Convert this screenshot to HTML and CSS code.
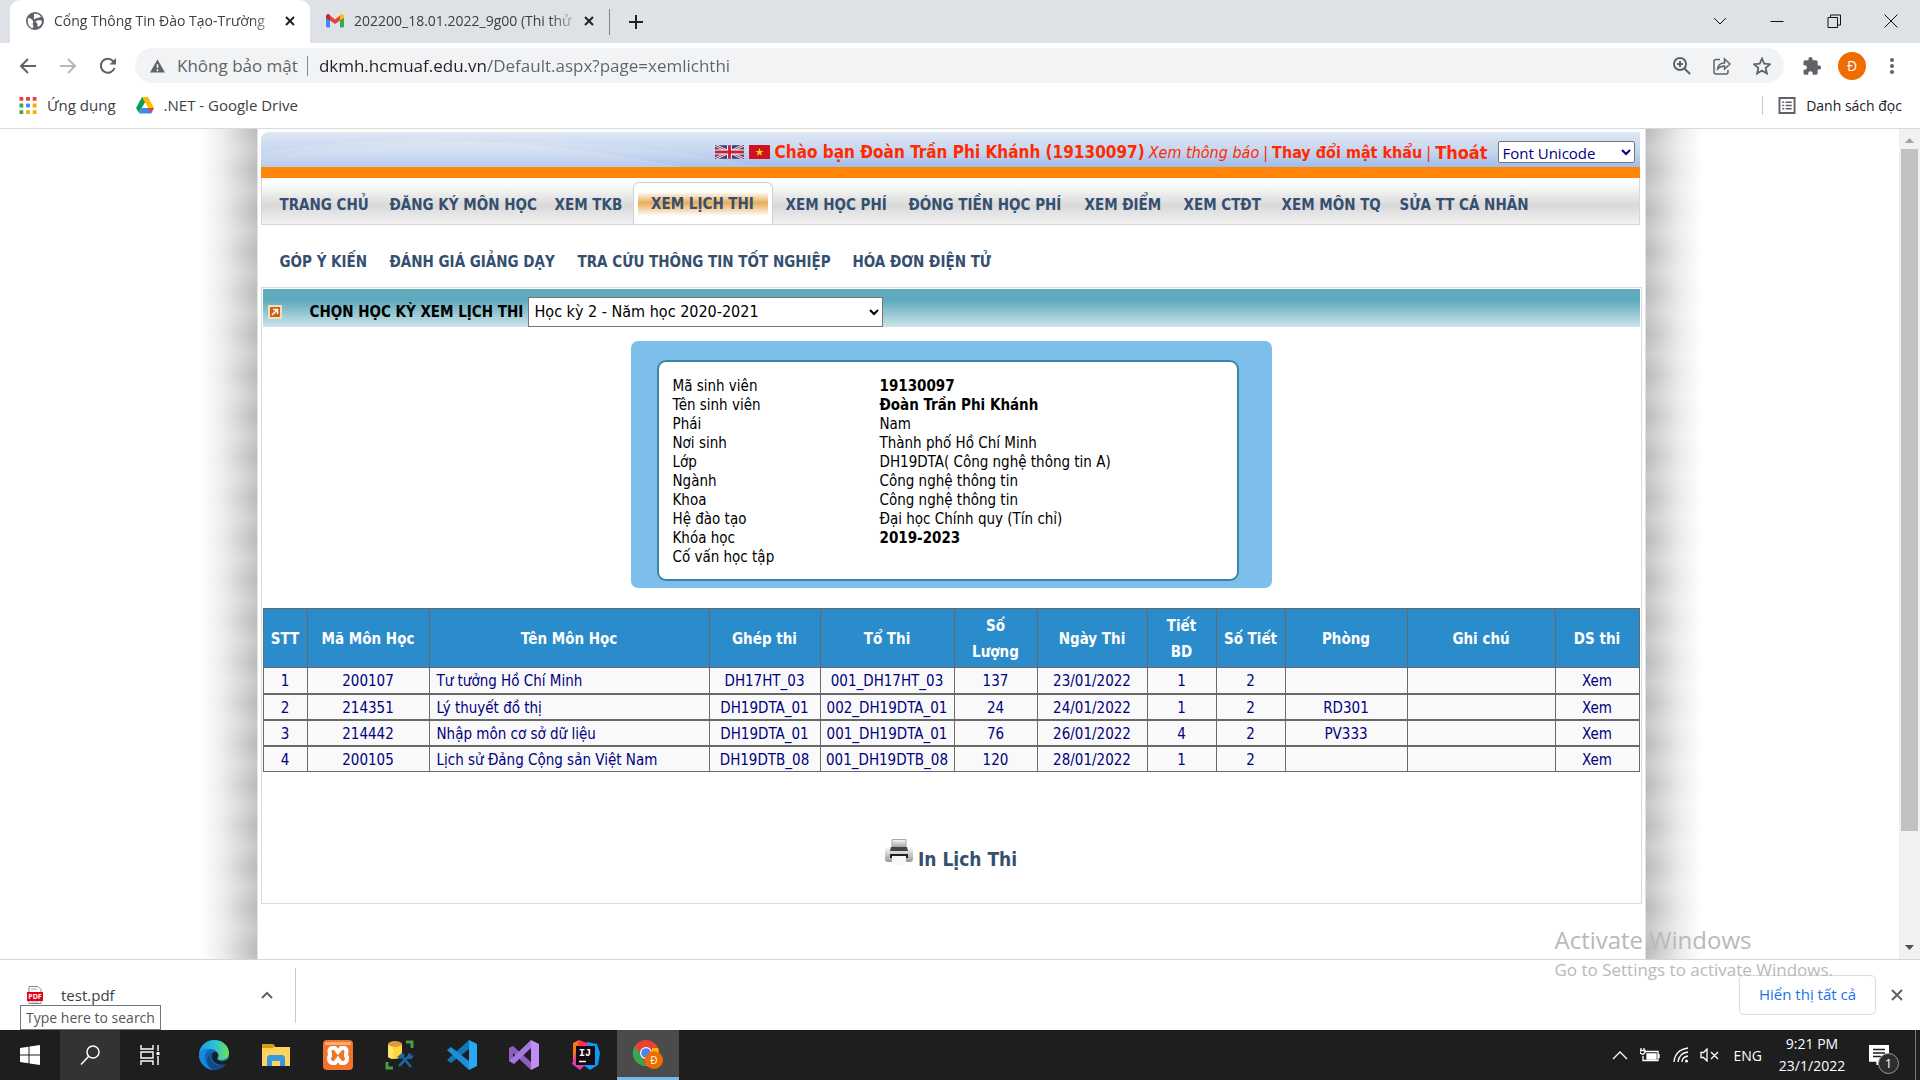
FILE: index.html
```html
<!DOCTYPE html>
<html lang="vi">
<head>
<meta charset="utf-8">
<title>Cổng Thông Tin Đào Tạo</title>
<link rel="stylesheet" href="styles.css">
</head>
<body>
<header class="browser">
  <div class="tabstrip">
    <div class="tab tab-active">
      <svg class="favicon" viewBox="0 0 18 18"><circle cx="9" cy="9" r="9" fill="#5f6368"/><path d="M2 6c2 0 4 1 5 3s-1 2 0 4 0 3-1 3C3 15 1 11 2 6zM8 2c3-1 6 1 7 3-2 0-2 1-4 1S9 8 8 7s1-2 0-3zM10 9c2-1 5-1 6 0 0 3-2 5-4 6-1-1 0-3-1-4s-2-1-1-2z" fill="#fff"/></svg>
      <span class="tab-title">Cổng Thông Tin Đào Tạo-Trường</span>
      <button class="tab-close" aria-label="Đóng"><svg viewBox="0 0 10 10"><path d="M1 1l8 8M9 1L1 9"/></svg></button>
    </div>
    <div class="tab tab-second">
      <svg class="favicon" viewBox="0 0 18 18"><path d="M0 4v10q0 1.500 1.500 1.500H4V8z" fill="#4285f4"/><path d="M14 8v7.500h2.500Q18 15.500 18 14V4z" fill="#34a853"/><path d="M4 3.500v5L9 12l5-3.500v-5L9 7.500z" fill="#ea4335"/><path d="M0 4.500Q0 2 2 2q1 0 2 1v5.500L0 6z" fill="#c5221f"/><path d="M18 4.500Q18 2 16 2q-1 0-2 1v5.500L18 6z" fill="#fbbc04"/></svg>
      <span class="tab-title">202200_18.01.2022_9g00 (Thi thử</span>
      <button class="tab-close" aria-label="Đóng"><svg viewBox="0 0 10 10"><path d="M1 1l8 8M9 1L1 9"/></svg></button>
    </div>
    <button class="newtab" aria-label="Thẻ mới"><svg viewBox="0 0 16 16"><path d="M8 1v14M1 8h14"/></svg></button>
    <div class="winctl">
      <button aria-label="Tìm thẻ"><svg viewBox="0 0 14 14"><path d="M1 4l6 6 6-6"/></svg></button>
      <button aria-label="Thu nhỏ"><svg viewBox="0 0 14 14"><path d="M0.500 7.500h13"/></svg></button>
      <button aria-label="Khôi phục"><svg viewBox="0 0 14 14"><path d="M1 3.500h9.500v10H1zM3.500 3.500v-2.500h10v10h-3"/></svg></button>
      <button aria-label="Đóng"><svg viewBox="0 0 14 14"><path d="M0.500 0.500l13 13M13.500 0.500l-13 13"/></svg></button>
    </div>
  </div>
  <div class="toolbar">
    <button class="nav" aria-label="Quay lại"><svg viewBox="0 0 18 18"><path d="M17 9H2M9 2L2 9l7 7"/></svg></button>
    <button class="nav nav-off" aria-label="Tiến"><svg viewBox="0 0 18 18"><path d="M1 9h15M9 2l7 7-7 7"/></svg></button>
    <button class="nav" aria-label="Tải lại"><svg viewBox="0 0 18 18"><path d="M15.500 11A7 7 0 1 1 14 4l2 2"/><path d="M17 1v6.500h-6.500z" fill="#5f6368" stroke="none"/></svg></button>
    <div class="omnibox">
      <svg class="warn" viewBox="0 0 16 14"><path d="M8 0l8 14H0z" fill="#5f6368"/><path d="M8 5v4M8 10.500v2" stroke="#fff" stroke-width="1.600"/></svg>
      <span class="insecure">Không bảo mật</span>
      <input class="url" aria-label="Địa chỉ" value="dkmh.hcmuaf.edu.vn/Default.aspx?page=xemlichthi">
      <button class="nav" aria-label="Thu phóng"><svg viewBox="0 0 18 18"><circle cx="7" cy="7" r="6"/><path d="M11.500 11.500l5.500 5.500M4 7h6M7 4v6"/></svg></button>
      <button class="nav" aria-label="Chia sẻ"><svg viewBox="0 0 18 18"><path d="M7 2.500H3q-2 0-2 2V15q0 2 2 2h10q2 0 2-2v-2M4.500 12c.5-4 3-6 7-6V2L17 7l-5.500 5V9c-3 0-5 1-7 3z" stroke-width="1.500"/></svg></button>
      <button class="nav" aria-label="Đánh dấu"><svg viewBox="0 0 18 18"><path d="M9 1.500l2.200 5.200 5.800.5-4.400 3.800 1.300 5.500L9 13.500l-4.900 3 1.300-5.500L1 7.200l5.800-.5z" stroke-width="1.800"/></svg></button>
    </div>
    <button class="nav" aria-label="Tiện ích"><svg viewBox="0 0 18 18"><path d="M16 8.500h-1.300V5q0-1.700-1.700-1.700H9.600V2.200a2.100 2.100 0 0 0-4.200 0v1.100H2Q.5 3.300.5 5v3.200h1.200a2.200 2.200 0 0 1 0 4.500H.5V16q0 1.700 1.500 1.700h3.200v-1.200a2.200 2.200 0 0 1 4.500 0v1.200H13q1.700 0 1.700-1.700v-3.400H16a2 2 0 0 0 0-4.100z" fill="#5f6368" stroke="none"/></svg></button>
    <button class="avatar">Đ</button>
    <button class="nav" aria-label="Menu"><svg viewBox="0 0 18 18"><g fill="#5f6368" stroke="none"><circle cx="9" cy="3" r="2"/><circle cx="9" cy="9" r="2"/><circle cx="9" cy="15" r="2"/></g></svg></button>
  </div>
  <div class="bookmarks">
    <a href="#" class="bookmark"><svg viewBox="0 0 18 18"><path d="M0 0h4v4H0zM7 0h4v4H7zM14 0h4v4h-4z" fill="#ea4335"/><path d="M0 7h4v4H0zM0 14h4v4H0z" fill="#34a853"/><path d="M7 7h4v4H7z" fill="#4285f4"/><path d="M14 7h4v4h-4zM7 14h4v4H7zM14 14h4v4h-4z" fill="#f9ab00"/></svg><span>Ứng dụng</span></a>
    <a href="#" class="bookmark"><svg viewBox="0 0 18 17"><path d="M6 0h6L9 5.500 3 16 0 11z" fill="#0f9d58"/><path d="M6 0h6l6 11h-6z" fill="#fbbc04"/><path d="M6 11h12l-3 5.500H3z" fill="#4285f4"/><path d="M12 11h6l-3 5.500z" fill="#ea4335"/><path d="M9 5.500L12 11H6z" fill="#fff"/></svg><span>.NET - Google Drive</span></a>
    <a href="#" class="bookmark readlist"><svg viewBox="0 0 18 18"><path d="M1 1h16v16H1z" fill="none" stroke="#5f6368" stroke-width="2"/><path d="M4 5.500h2M7.500 5.500H14M4 9h2M7.500 9H14M4 12.500h2M7.500 12.500H14" stroke="#5f6368" stroke-width="1.500"/></svg><span>Danh sách đọc</span></a>
  </div>
</header>

<div class="viewport">
  <main class="page">
    <div class="sheet">
      <div class="banner">
        <svg class="wave" viewBox="0 0 500 35" preserveAspectRatio="none"><path d="M0 20Q200-10 420 35H0z" fill="#fff" opacity=".15"/><path d="M0 25Q300-10 500 35H0z" fill="#fff" opacity=".12"/></svg>
        <div class="greet">
          <svg class="flag-uk" viewBox="0 0 30 14"><path fill="#3c3f77" d="M0 0h30v14H0z"/><path d="M0 0l30 14M30 0L0 14" stroke="#e8dfe4" stroke-width="3"/><path d="M0 0l30 14M30 0L0 14" stroke="#b8304a" stroke-width="1"/><path d="M15 0v14M0 7h30" stroke="#fff" stroke-width="5"/><path d="M15 0v14M0 7h30" stroke="#c8203a" stroke-width="3"/></svg>
          <svg class="flag-vn" viewBox="0 0 21 14"><path fill="#cf1126" d="M0 0h21v14H0z"/><path d="M10.500 3l1 3h3l-2.400 1.800.9 3-2.500-1.800L8 10.800l.9-3L6.500 6h3z" fill="#ffd800"/></svg>
          <b class="hello">Chào bạn Đoàn Trần Phi Khánh (19130097)</b>
          <a href="#" class="notice">Xem thông báo</a><i class="bar">|</i>
          <a href="#" class="pass">Thay đổi mật khẩu</a><i class="bar">|</i>
          <a href="#" class="logout">Thoát</a>
          <select class="fontsel" aria-label="Font"><option>Font Unicode</option></select>
        </div>
      </div>
      <nav class="menu">
        <div class="menu-row menu-main">
          <a href="#">TRANG CHỦ</a><a href="#">ĐĂNG KÝ MÔN HỌC</a><a href="#">XEM TKB</a><a href="#" class="current"><span>XEM LỊCH THI</span></a><a href="#">XEM HỌC PHÍ</a><a href="#">ĐÓNG TIỀN HỌC PHÍ</a><a href="#">XEM ĐIỂM</a><a href="#">XEM CTĐT</a><a href="#">XEM MÔN TQ</a><a href="#">SỬA TT CÁ NHÂN</a>
        </div>
        <div class="menu-row menu-sub">
          <a href="#">GÓP Ý KIẾN</a><a href="#">ĐÁNH GIÁ GIẢNG DẠY</a><a href="#">TRA CỨU THÔNG TIN TỐT NGHIỆP</a><a href="#">HÓA ĐƠN ĐIỆN TỬ</a>
        </div>
      </nav>
      <section class="box">
        <div class="term">
          <svg class="term-icon" viewBox="0 0 14 14"><path fill="#f3dcc4" d="M0 0h14v14H0z"/><path fill="#c8640c" d="M2 2h10v10H2z"/><path d="M4 10l5-5M5 4.500h4.500V9" stroke="#fff" stroke-width="1.500" fill="none"/></svg>
          <label for="term">CHỌN HỌC KỲ XEM LỊCH THI</label>
          <select id="term"><option>Học kỳ 2 - Năm học 2020-2021</option></select>
        </div>
        <div class="card">
          <dl class="info">
            <dt>Mã sinh viên</dt><dd><b>19130097</b></dd>
            <dt>Tên sinh viên</dt><dd><b>Đoàn Trần Phi Khánh</b></dd>
            <dt>Phái</dt><dd>Nam</dd>
            <dt>Nơi sinh</dt><dd>Thành phố Hồ Chí Minh</dd>
            <dt>Lớp</dt><dd>DH19DTA( Công nghệ thông tin A)</dd>
            <dt>Ngành</dt><dd>Công nghệ thông tin</dd>
            <dt>Khoa</dt><dd>Công nghệ thông tin</dd>
            <dt>Hệ đào tạo</dt><dd>Đại học Chính quy (Tín chỉ)</dd>
            <dt>Khóa học</dt><dd><b>2019-2023</b></dd>
            <dt>Cố vấn học tập</dt><dd></dd>
          </dl>
        </div>
        <table class="exams">
          <colgroup><col class="c-stt"><col class="c-code"><col class="c-name"><col class="c-merge"><col class="c-group"><col class="c-qty"><col class="c-date"><col class="c-num"><col class="c-num"><col class="c-room"><col class="c-note"><col class="c-list"></colgroup>
          <thead><tr><th>STT</th><th>Mã Môn Học</th><th>Tên Môn Học</th><th>Ghép thi</th><th>Tổ Thi</th><th>Số<br>Lượng</th><th>Ngày Thi</th><th>Tiết<br>BD</th><th>Số Tiết</th><th>Phòng</th><th>Ghi chú</th><th>DS thi</th></tr></thead>
          <tbody>
            <tr><td>1</td><td>200107</td><td class="name">Tư tưởng Hồ Chí Minh</td><td>DH17HT_03</td><td>001_DH17HT_03</td><td>137</td><td>23/01/2022</td><td>1</td><td>2</td><td></td><td></td><td><a href="#">Xem</a></td></tr>
            <tr><td>2</td><td>214351</td><td class="name">Lý thuyết đồ thị</td><td>DH19DTA_01</td><td>002_DH19DTA_01</td><td>24</td><td>24/01/2022</td><td>1</td><td>2</td><td>RD301</td><td></td><td><a href="#">Xem</a></td></tr>
            <tr><td>3</td><td>214442</td><td class="name">Nhập môn cơ sở dữ liệu</td><td>DH19DTA_01</td><td>001_DH19DTA_01</td><td>76</td><td>26/01/2022</td><td>4</td><td>2</td><td>PV333</td><td></td><td><a href="#">Xem</a></td></tr>
            <tr><td>4</td><td>200105</td><td class="name">Lịch sử Đảng Cộng sản Việt Nam</td><td>DH19DTB_08</td><td>001_DH19DTB_08</td><td>120</td><td>28/01/2022</td><td>1</td><td>2</td><td></td><td></td><td><a href="#">Xem</a></td></tr>
          </tbody>
        </table>
        <a href="#" class="print">
          <svg viewBox="0 0 28 27"><defs><linearGradient id="pg" x1="0" y1="0" x2="0" y2="1"><stop offset="0" stop-color="#fafafa"/><stop offset="1" stop-color="#999"/></linearGradient></defs><path d="M7 .5h14V9H7z" fill="url(#pg)" stroke="#aaa"/><rect x="0" y="8" width="28" height="15" rx="3" fill="url(#pg)"/><path d="M6 8h16l1 4H5z" fill="#444"/><path d="M5 15h18v4H5z" fill="#222"/><path d="M7 17h14v9H7z" fill="#f7f7f7"/></svg>
          <span>In Lịch Thi</span>
        </a>
      </section>
    </div>
  </main>
  <div class="scrollbar">
    <svg viewBox="0 0 9 5"><path d="M0 5l4.500-5L9 5z" fill="#a3a3a3"/></svg>
    <div class="thumb"></div>
    <svg viewBox="0 0 9 5"><path d="M0 0l4.500 5L9 0z" fill="#505050"/></svg>
  </div>
</div>

<footer class="shelf">
  <div class="download">
    <svg class="pdf" viewBox="0 0 16 18"><path d="M2 .5h9l3 3v14H2z" fill="#fff" stroke="#8a8a8a"/><path d="M4 3h6M4 16h8" stroke="#aaa"/><path d="M0 6h16v9H0z" fill="#e2001a"/><text x="8" y="13" class="pdf-text">PDF</text></svg>
    <span>test.pdf</span>
    <button aria-label="Tùy chọn"><svg viewBox="0 0 12 8"><path d="M1 7l5-5 5 5"/></svg></button>
  </div>
  <button class="showall">Hiển thị tất cả</button>
  <button class="shelf-close" aria-label="Đóng"><svg viewBox="0 0 12 12"><path d="M1 1l10 10M11 1L1 11"/></svg></button>
  <div class="tooltip">Type here to search</div>
  <div class="activate"><div class="activate-title">Activate Windows</div><div>Go to Settings to activate Windows.</div></div>
</footer>

<nav class="taskbar">
  <button class="task" aria-label="Start"><svg viewBox="0 0 20 20"><path d="M0 3l8.500-1.200v7.700H0zM9.500 1.600L20 0v9.500H9.500zM0 10.500h8.500v7.700L0 17zM9.500 10.500H20V20L9.500 18.400z" fill="#fff"/></svg></button>
  <button class="task task-search" aria-label="Search"><svg viewBox="0 0 20 20"><g fill="none" stroke="#fff" stroke-width="1.500"><circle cx="13" cy="7" r="6"/><path d="M8.500 11.500L1 19.500"/></g></svg></button>
  <button class="task" aria-label="Task view"><svg viewBox="0 0 20 20"><path d="M1 0v4h12V0M1 20v-4h12v4M1 7h12v6H1zM18 0v6M18 11v9" fill="none" stroke="#fff" stroke-width="1.400"/><path d="M16.500 7h3v3h-3z" fill="#fff"/></svg></button>
  <button class="task app" aria-label="Edge"><svg viewBox="0 0 30 30"><defs><linearGradient id="eg"><stop offset="0" stop-color="#1f9de4"/><stop offset=".55" stop-color="#2cc3d5"/><stop offset="1" stop-color="#6fe04e"/></linearGradient></defs><circle cx="15" cy="15" r="15" fill="#0f66b8"/><path d="M0 14C1 5 8 0 15 0c9 0 15 6 15 13 0 5-4 7-7 7-4 0-5-1-4-3 1-5-3-8-8-8C6 9 1 11 0 14z" fill="url(#eg)"/><path d="M0 15c1-5 6-7 11-6-4 2-6 7-5 11 1 5 5 9 9 10C7 30 0 23 0 15z" fill="#168ad8"/><path d="M12 13c-3 9 5 15 15 11-3 4-8 6-12 6-8-2-9-13-3-17z" fill="#114a8b"/><path d="M19 17c-1 1-2 3 2 4 3 1 6 0 8-2l1 1-2 4c-6 2-14 0-15-6-1-4 1-6 3-6 3 0 4 3 3 5z" fill="#1e1e1e"/></svg></button>
  <button class="task app" aria-label="Explorer"><svg viewBox="0 0 30 30"><path d="M1 4h11l2 3h15v19H1z" fill="#ffd45e"/><path d="M1 4h11l2 2-2 2H1z" fill="#d99a12"/><path d="M6 26V17l2-2h14l2 2v9h-5v-5h-8v5z" fill="#3a96dd"/></svg></button>
  <button class="task app" aria-label="XAMPP"><svg viewBox="0 0 30 30"><rect width="30" height="30" rx="4" fill="#f0742a"/><path d="M2 2h26v3H2z" fill="#f9ab7c"/><path d="M9.500 8h2.500l3 4 3-4h2.500q3 0 3 3.500T21 15q3 0 3 3.500t-3 4.500h-3l-3-4-3 4H9q-3-1-3-4.500T9 15q-2.500 0-2.500-3.500T9.500 8z" fill="none" stroke="#fff" stroke-width="4"/></svg></button>
  <button class="task app" aria-label="SSMS"><svg viewBox="0 0 30 30"><path d="M3 4v13q6 4 14 0V4z" fill="#fcd53f"/><path d="M3 4v13q2 2 5 2V4z" fill="#ffe66b"/><ellipse cx="10" cy="4" rx="7" ry="3" fill="#e39a3c"/><path d="M21 2h6v6M2 22v6h6" fill="none" stroke="#4a9a48" stroke-width="3"/><path d="M14 26l12-12M16 15l10 12" stroke="#1b64a8" stroke-width="2.500"/><path d="M12 17l5-4 3 2-4 4zM23 13l3 3 3-1-2 4h-4z" fill="#1b64a8"/></svg></button>
  <button class="task app" aria-label="VS Code"><svg viewBox="0 0 30 30"><path d="M22 0l8 4v22l-8 4z" fill="#29a9f2"/><path d="M22 0v9L4 23l-4-3z" fill="#1077bd"/><path d="M22 30v-9L4 7l-4 3z" fill="#1b8fd8"/></svg></button>
  <button class="task app" aria-label="Visual Studio"><svg viewBox="0 0 30 30"><path d="M0 8l4-2 18 16v8L4 13v9l-4-1z" fill="#8b5fc0"/><path d="M22 0l8 4v22l-8 4z" fill="#c08df5"/><path d="M22 0v8L5 24l-5-3z" fill="#a678de"/></svg></button>
  <button class="task app" aria-label="IntelliJ"><svg viewBox="0 0 30 30"><path d="M2 3l6-3 8 5-6 20-8-4z" fill="#f97a12"/><path d="M1 24l4-12 10 12-6 6z" fill="#e23aa6"/><path d="M16 2l10 2 3 9-2 12-8 5-7-5z" fill="#0a9cf0"/><path d="M8 0l8 3 2 5H6z" fill="#fe315d"/><path d="M5 6h19v19H5z" fill="#160a12"/><path d="M8 21.500h7" stroke="#fff" stroke-width="1.500"/><text x="8" y="16" class="ij-text">IJ</text></svg></button>
  <button class="task app task-on" aria-label="Chrome"><svg viewBox="0 0 30 30"><circle cx="13" cy="14" r="13" fill="#ea4335"/><path d="M2 7l7 11 4 9A13 13 0 0 1 2 7z" fill="#34a853"/><path d="M13 27l6-11V9h6a13 13 0 0 1-12 18z" fill="#fbbc04"/><circle cx="13" cy="14" r="6" fill="#fff"/><circle cx="13" cy="14" r="4.800" fill="#4285f4"/><circle cx="21" cy="21" r="9" fill="#ee6c00"/><text x="21" y="25" class="chrome-text">Đ</text></svg></button>
  <div class="tray">
    <svg class="t-up" viewBox="0 0 16 9"><path d="M1 8l7-7 7 7"/></svg>
    <svg class="t-bat" viewBox="0 0 20 14"><path d="M5 3.500h13v9H3V8M19 6v4"/><path d="M7 6h9v5H7z" fill="#fff"/><path d="M1 0v2M4 0v2M0 2.500h5v2L3 6.500 0 5z"/></svg>
    <svg class="t-wifi" viewBox="0 0 16 16"><path d="M1 15Q2 3 15 1M5 15Q6 6 15 5M9 15Q9 10 15 9"/><circle cx="13.500" cy="14" r="1.500" fill="#fff" stroke="none"/></svg>
    <svg class="t-vol" viewBox="0 0 19 14"><path d="M1 4.500h2.500L7 1v12L3.500 9.500H1zM11 4l7 7M18 4l-7 7"/></svg>
    <span class="lang">ENG</span>
    <div class="clock"><span>9:21 PM</span><span>23/1/2022</span></div>
    <div class="notify"><svg viewBox="0 0 20 20"><path d="M0 0h20v16h-8l-4 4v-4H0z" fill="#fff"/><path d="M4 4.500h12M4 8h12M4 11.500h8" stroke="#1e1e1e"/></svg><span class="count">1</span></div>
  </div>
</nav>
</body>
</html>
```
FILE: styles.css
```css
* { box-sizing: border-box; }
body { margin: 0; height: 100vh; display: flex; flex-direction: column; overflow: hidden; background: #fff; font-family: "Open Sans", "Noto Sans", sans-serif; font-size: 14px; color: #3c4043; }
button { border: 0; padding: 0; background: none; font: inherit; color: inherit; display: flex; align-items: center; justify-content: center; }
a { color: inherit; text-decoration: none; }
svg { display: block; flex: none; }

/* Browser frame */
.browser { flex: none; border-bottom: 1px solid #d9dadc; }
.tabstrip { display: flex; align-items: center; height: 43px; background: #dee1e6; padding-left: 10px; }
.tab { display: flex; align-items: center; height: 43px; width: 300px; padding: 0 13px 2px 16px; }
.tab-active { background: #fff; border-radius: 10px 10px 0 0; }
.tab-second { height: 26px; border-right: 1px solid #808387; }
.favicon { width: 18px; height: 18px; }
.tab-title { flex: 1; min-width: 0; margin-left: 10px; overflow: hidden; white-space: nowrap; line-height: 24px; -webkit-mask-image: linear-gradient(90deg, #000 88%, rgba(0,0,0,.1)); mask-image: linear-gradient(90deg, #000 88%, rgba(0,0,0,.1)); }
.tab-close { width: 14px; height: 20px; margin-left: 4px; }
.tab-close svg { width: 10px; height: 10px; fill: none; stroke: #202124; stroke-width: 2; }
.newtab { width: 52px; height: 41px; }
.newtab svg { width: 16px; height: 16px; fill: none; stroke: #202124; stroke-width: 2; }
.winctl { display: flex; margin: 0 1px 2px auto; height: 36px; }
.winctl button { width: 57px; }
.winctl svg { width: 14px; height: 14px; fill: none; stroke: #111; stroke-width: 1; }
.toolbar { display: flex; align-items: center; height: 45px; padding: 0 8px; }
.nav { width: 40px; height: 34px; }
.nav svg { width: 18px; height: 18px; fill: none; stroke: #5f6368; stroke-width: 2; }
.nav-off { opacity: .45; }
.omnibox { flex: 1; display: flex; align-items: center; height: 35px; margin: 0 8px 0 7px; padding: 0 2px 0 15px; border-radius: 18px; background: #f1f3f4; font-size: 17px; color: #5f6368; }
.warn { width: 15px; height: 14px; }
.insecure { margin-left: 12px; padding-right: 9px; border-right: 1px solid #80868b; line-height: 20px; white-space: nowrap; }
.url { flex: 1; min-width: 0; border: 0; padding: 0 0 0 11px; outline: 0; font: inherit; color: transparent; background: linear-gradient(90deg, #202124 179px, #5f6368 179px); -webkit-background-clip: text; background-clip: text; }
.avatar { width: 28px; height: 28px; margin: 0 6px; border-radius: 50%; background: #ee6c00; color: #fff; font-size: 14px; }
.bookmarks { display: flex; align-items: center; gap: 20px; height: 40px; padding: 0 18px 6px 19px; font-size: 15px; }
.bookmark { display: flex; align-items: center; gap: 10px; white-space: nowrap; }
.bookmark svg { width: 18px; height: 17px; }
.readlist { margin-left: auto; padding-left: 15px; border-left: 1px solid #c8cacd; color: #202124; font-size: 14px; }

/* Web page */
.viewport { flex: 1; min-height: 0; display: flex; overflow: hidden; font-family: "DejaVu Sans Condensed", "DejaVu Sans", sans-serif; font-stretch: condensed; font-size: 15px; }
.page { flex: 1; display: flex; justify-content: center; min-width: 0; padding-left: 3px; }
.page::before, .page::after { content: ""; width: 56px; flex: none; }
.page::before { background: linear-gradient(90deg, #fff, rgba(255,255,255,.7) 40%, rgba(255,255,255,0)), repeating-linear-gradient(#b9b9b9 0, #c8c8c8 20px, #b9b9b9 41px); }
.page::after { background: linear-gradient(270deg, #fff, rgba(255,255,255,.7) 40%, rgba(255,255,255,0)), repeating-linear-gradient(#b9b9b9 0, #c8c8c8 20px, #b9b9b9 41px); }
.sheet { flex: 0 1 1386px; padding: 3px 3px 0; border: solid #e4e4e4; border-width: 0 1px; }
.banner { display: grid; height: 46px; margin-right: 2px; border-radius: 8px 0 0; border-bottom: 11px solid #ff8408; background: linear-gradient(#dfe8f4, #c3d4ee 60%, #9fbce8); }
.wave { grid-area: 1 / 1; width: 500px; height: 35px; }
.greet { grid-area: 1 / 1; display: flex; align-items: center; justify-content: flex-end; height: 40px; padding-right: 5px; color: #ff2a00; font-size: 16px; white-space: nowrap; }
.flag-uk { width: 29px; height: 14px; margin-right: 5px; }
.flag-vn { width: 21px; height: 14px; margin-right: 5px; }
.hello { font-size: 17px; }
.notice { margin-left: 4px; font-style: italic; }
.bar { margin: 0 4px; font-style: normal; }
.pass { font-weight: bold; }
.logout { font-weight: bold; font-size: 18px; }
.fontsel { width: 137px; height: 22px; margin-left: 10px; padding: 0; border: 1px solid #767676; border-radius: 2px; background-color: #fff; color: #000080; font: 15px/20px "Open Sans", sans-serif; }
.menu { color: #344f70; font-weight: bold; white-space: nowrap; }
.menu-row { display: grid; padding-left: 7px; }
.menu-row a { padding-left: 11px; }
.menu-main { grid-template-columns: 110px 165px 89px 142px 123px 176px 99px 98px 118px 1fr; align-items: center; height: 47px; margin-right: 2px; border: solid #d6d6d6; border-width: 0 1px 1px; background: linear-gradient(#fff 10%, #d9d9d9 60%, #f2f2f2); }
.menu-main a { padding-top: 8px; }
.menu-main .current { align-self: end; height: 42px; padding: 9px 4px 0; margin-right: 2px; border: 1px solid #d0d0d0; border-bottom: 0; border-radius: 6px 6px 0 0; background: #fff; text-align: center; }
.current span { display: block; line-height: 24px; background: linear-gradient(#fff, #e9ac58 45%, #fff); }
.menu-sub { grid-template-columns: 110px 188px 275px 1fr; align-content: center; height: 62px; padding: 11px 0 0 8px; }
.box { height: 617px; border: 1px solid #dbdbdb; padding: 1px; }
.term { display: flex; align-items: center; height: 38px; padding: 7px 5px 0; background: linear-gradient(#5faabc 30%, #cde5ea); color: #000; }
.term-icon { width: 14px; height: 14px; }
.term label { width: 218px; margin-left: 28px; font-weight: bold; white-space: nowrap; }
.term select { width: 355px; height: 30px; padding: 0 2px; border: 1px solid #767676; border-radius: 0; background-color: #fff; font: 16px "DejaVu Sans Condensed", "DejaVu Sans", sans-serif; font-stretch: condensed; }
.card { width: 641px; max-width: 100%; margin: 14px auto 20px; padding: 19px 33px 7px 26px; border-radius: 7px; background: #7dbfeb; color: #000; }
.info { display: grid; grid-template-columns: 207px 1fr; grid-auto-rows: 19px; line-height: 19px; height: 221px; margin: 0; padding: 15px 14px; border: 2px solid #3b86a6; border-radius: 9px; background: #fff; }
.info dd { margin: 0; }
.exams { width: 100%; table-layout: fixed; border-collapse: collapse; color: #000080; text-align: center; }
.exams th, .exams td { padding: 2px 7px 0; border: 1px solid #696969; white-space: nowrap; }
.exams th { height: 59px; padding: 2px 0 0; background: #2b8ccc; color: #fff; line-height: 26px; }
.exams td { height: 26px; background: #f9f9f9; border-bottom-width: 2px; line-height: 20px; }
.exams tr:last-child td { border-bottom-width: 1px; }
.exams .name { text-align: left; }
.exams td:nth-child(4), .exams td:nth-child(5) { padding: 2px 0 0; }
.c-stt { width: 44px; } .c-code { width: 122px; } .c-name { width: 280px; } .c-merge { width: 111px; } .c-group { width: 134px; } .c-qty { width: 83px; }
.c-date { width: 110px; } .c-num { width: 69px; } .c-room { width: 122px; } .c-note { width: 148px; } .c-list { width: 84px; }
.print { display: flex; justify-content: center; gap: 5px; margin-top: 67px; color: #344f70; font-weight: bold; font-size: 19px; line-height: 22px; }
.print svg { width: 28px; height: 27px; }
.print span { padding-top: 9px; }
.scrollbar { flex: none; display: flex; flex-direction: column; justify-content: space-between; width: 21px; padding: 9px 2px; background: #f1f1f1; }
.scrollbar svg { width: 9px; height: 5px; margin: 0 auto; }
.thumb { flex: 0 1 84%; width: 17px; margin-bottom: auto; margin-top: 6px; background: #c1c1c1; }

/* Download shelf */
.shelf { position: relative; flex: none; display: flex; align-items: center; height: 71px; padding-right: 17px; border-top: 1px solid #d5d6d8; }
.download { display: flex; align-items: center; width: 296px; height: 55px; padding-left: 27px; border-right: 1px solid #c8cacd; font-size: 15px; }
.download button { margin: 0 22px 0 auto; }
.download button svg { width: 12px; height: 8px; fill: none; stroke: #5f6368; stroke-width: 2; }
.pdf { width: 16px; height: 18px; margin-right: 18px; }
.pdf-text { font: bold 7px "Open Sans", sans-serif; fill: #fff; text-anchor: middle; }
.showall { width: 137px; height: 40px; margin-left: auto; padding-bottom: 2px; border: 1px solid #dadce0; border-radius: 5px; color: #1a73e8; font-size: 15px; }
.shelf-close { margin-left: 15px; }
.shelf-close svg { width: 12px; height: 12px; fill: none; stroke: #5f6368; stroke-width: 2; }
.tooltip { position: absolute; left: 20px; bottom: 0; width: 141px; border: 1px solid #767676; background: #fff; color: #575757; text-align: center; line-height: 23px; white-space: nowrap; }
.activate { position: absolute; right: 87px; top: -38px; color: #b9b9b9; font-size: 17px; line-height: 24px; white-space: nowrap; pointer-events: none; }
.activate-title { font-size: 24px; line-height: 36px; }

/* Taskbar */
.taskbar { flex: none; display: flex; height: 50px; background: #1e1e1e; color: #fff; }
.task { width: 60px; height: 50px; }
.task svg { width: 20px; height: 20px; }
.task-search { background: #333; }
.app { width: 62px; }
.task:nth-child(4) { margin-left: 3px; }
.app svg { width: 30px; height: 30px; }
.task-on { background: #4b4b4b; border-bottom: 3px solid #76b9ed; }
.ij-text { font: bold 10px "Liberation Mono", monospace; fill: #fff; }
.chrome-text { font: 10px "Open Sans", sans-serif; fill: #fff; text-anchor: middle; }
.tray { display: flex; align-items: center; margin-left: auto; margin-right: 4px; border-right: 1px solid #777; }
.tray svg { fill: none; stroke: #fff; stroke-width: 1.3; }
.t-up { width: 16px; height: 9px; }
.t-bat { width: 20px; height: 14px; margin-left: 12px; }
.t-wifi { width: 16px; height: 16px; margin-left: 13px; }
.t-vol { width: 19px; height: 14px; margin-left: 11px; }
.lang { margin-left: 15px; }
.clock { display: flex; flex-direction: column; align-items: center; width: 70px; margin-left: 15px; line-height: 22px; white-space: nowrap; }
.notify { position: relative; margin: 0 26px 0 22px; }
.notify svg { width: 20px; height: 20px; }
.count { position: absolute; left: 9px; top: 8px; width: 21px; height: 21px; border: 1px solid #999; border-radius: 50%; background: #2d2d2d; font-size: 13px; line-height: 19px; text-align: center; }
```
